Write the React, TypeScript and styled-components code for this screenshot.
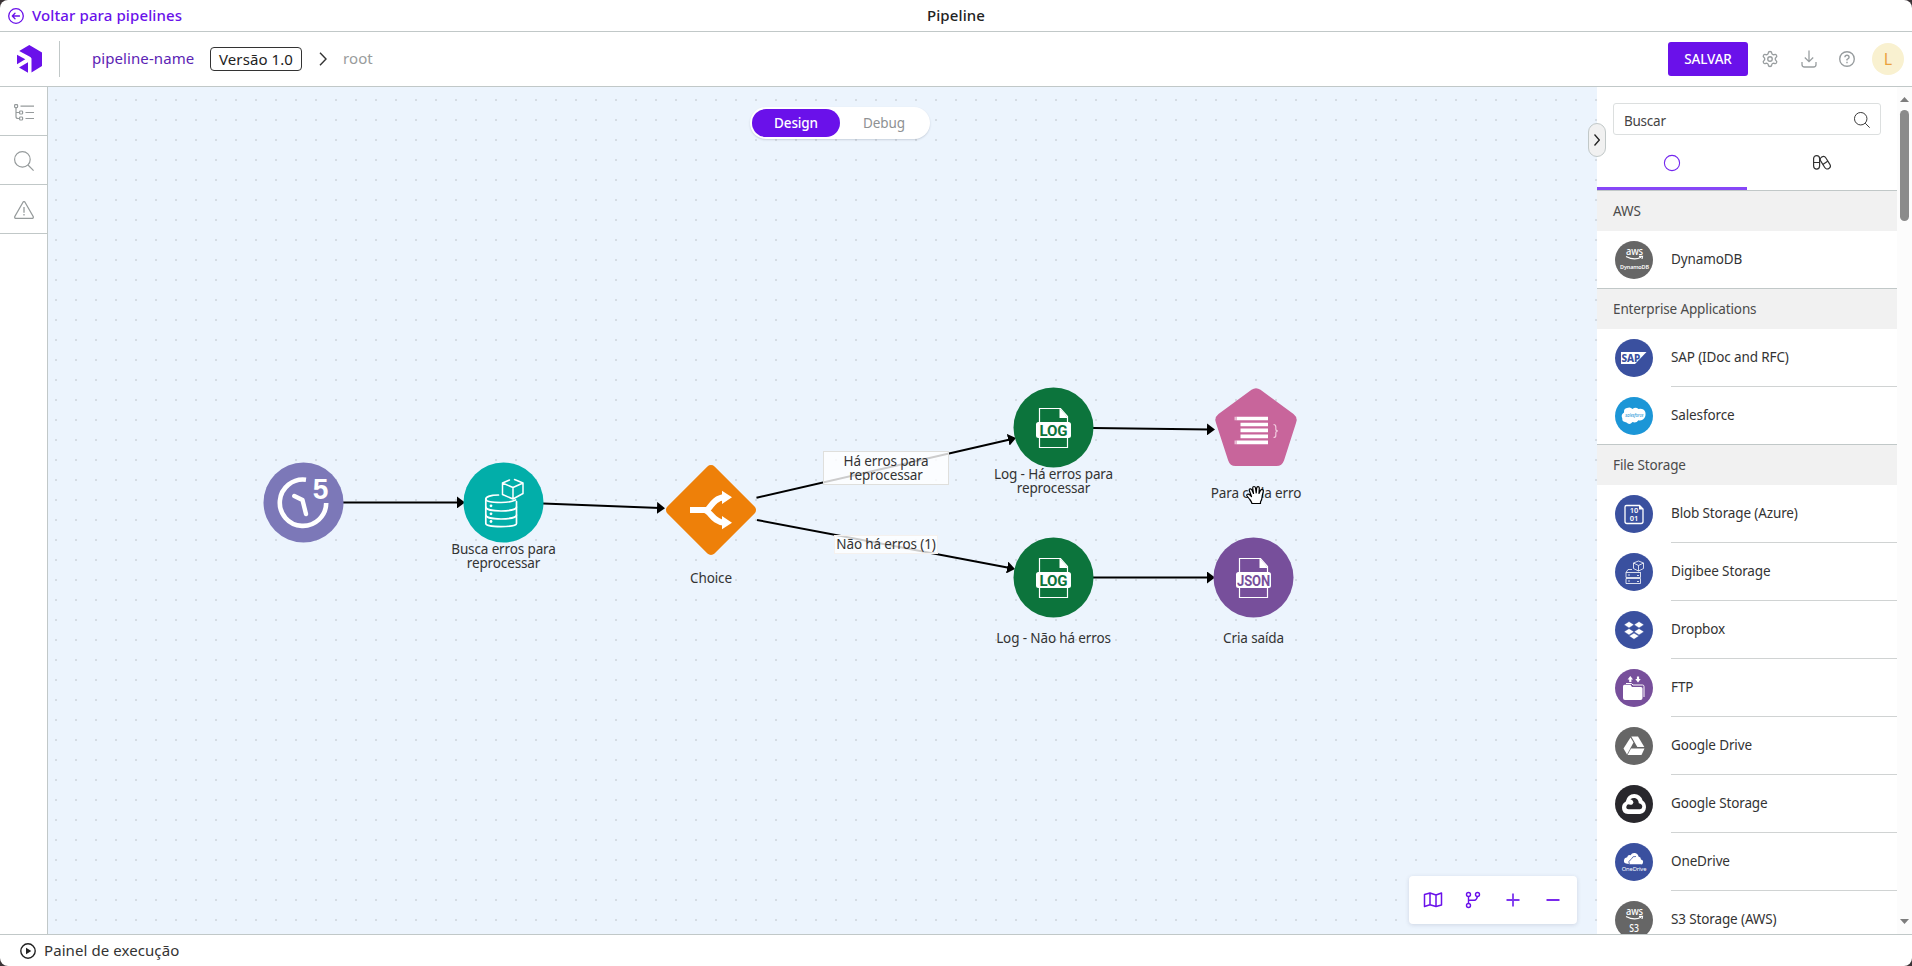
import React from 'react';
import styled, { createGlobalStyle, css } from 'styled-components';
import { Settings } from 'lucide-react';

const purple = '#6a11ea';
const line = '#c1c8c8';

const GlobalStyle = createGlobalStyle`
  * { box-sizing: border-box; }
  body { margin: 0; background: #3a3336; }
  button { font: inherit; letter-spacing: inherit; border: 0; background: none; padding: 0; margin: 0; }
`;

const Shell = styled.div`
  display: flex;
  flex-direction: column;
  width: 1912px;
  height: 966px;
  overflow: hidden;
  border-radius: 8px;
  background: #fff;
  color: #333;
  font: 13.5px/20px 'Noto Sans', sans-serif;
  letter-spacing: -0.13px;
`;

const TitleBar = styled.div`
  display: grid;
  grid-template-columns: 1fr auto 1fr;
  align-items: center;
  height: 32px;
  padding: 0 8px 2px;
  border-bottom: 1px solid ${line};
  font-size: 15px;
  font-weight: 500;
  letter-spacing: 0.11px;
  color: #222;
`;

const BackLink = styled.div`
  display: flex;
  align-items: center;
  gap: 8px;
  color: ${purple};
  svg { position: relative; top: 1px; }
`;

const Header = styled.header`
  display: flex;
  align-items: center;
  height: 55px;
  padding: 0 8px 0 16px;
  border-bottom: 1px solid ${line};
`;

const Divider = styled.div`
  width: 1px;
  height: 36px;
  margin: 0 32px 0 16px;
  background: ${line};
`;

const Crumbs = styled.div`
  display: flex;
  align-items: center;
  flex: 1;
  font-size: 15px;
  letter-spacing: 0.08px;
`;

const PipelineName = styled.span`
  width: 118px;
  padding-bottom: 2px;
  color: #5b23b4;
`;

const Version = styled.span`
  display: flex;
  align-items: center;
  justify-content: center;
  width: 92px;
  height: 24px;
  border: 1px solid #333;
  border-radius: 4px;
  color: #222;
`;

const Root = styled.span`
  padding-bottom: 2px;
  color: #999c9c;
`;

const SaveButton = styled.button`
  width: 80px;
  height: 34px;
  border-radius: 3px;
  background: ${purple};
  color: #fff;
  font-size: 13.5px;
  font-weight: 500;
`;

const HeaderTools = styled.div`
  display: flex;
  align-items: center;
  color: #999ea0;
`;

const ToolIcon = styled.span<{ $w: number }>`
  display: flex;
  align-items: center;
  justify-content: center;
  width: ${(p) => p.$w}px;
  height: 32px;
`;

const Avatar = styled.span`
  display: flex;
  align-items: center;
  justify-content: center;
  width: 32px;
  height: 32px;
  margin-left: 3px;
  border-radius: 50%;
  background: #f9f1d0;
  color: #eba13c;
  font-size: 16px;
`;

const Body = styled.div`
  display: flex;
  flex: 1;
  min-height: 0;
`;

const Rail = styled.nav`
  width: 48px;
  border-right: 1px solid ${line};
`;

const RailItem = styled.div`
  display: flex;
  align-items: center;
  justify-content: center;
  height: 49px;
  padding: 2px 0 0 1px;
  border-bottom: 1px solid ${line};
  color: #969b9c;
`;

const Canvas = styled.main`
  position: relative;
  display: flex;
  justify-content: center;
  flex: 1;
  background: conic-gradient(from 270deg at 2px 2px, #d5dce3 90deg, transparent 0) 7px 12px / 20px 20px #ecf4fd;
`;

const ModeSwitch = styled.div`
  position: absolute;
  top: 20px;
  left: 702px;
  display: flex;
  width: 180px;
  height: 32px;
  padding: 2px;
  border-radius: 16px;
  background: #fff;
  box-shadow: 0 1px 2px rgba(60, 70, 90, 0.2);
`;

const Mode = styled.button<{ $active?: boolean }>`
  width: 88px;
  border-radius: 14px;
  color: #8e9193;
  ${(p) => p.$active && css`
    background: ${purple};
    color: #fff;
    font-weight: 500;
  `}
`;

const Edges = styled.svg`
  position: absolute;
  inset: 0;
`;

const NodeBox = styled.div<{ $x: number; $y: number }>`
  position: absolute;
  left: ${(p) => p.$x - 48}px;
  top: ${(p) => p.$y - 87}px;
  svg { display: block; }
`;

const NodeLabel = styled.div<{ $x: number; $y: number }>`
  position: absolute;
  left: ${(p) => p.$x - 48 - 70}px;
  top: ${(p) => p.$y - 87}px;
  width: 140px;
  line-height: 14px;
  text-align: center;
  white-space: pre;
`;

const EdgeLabel = styled.div<{ $x: number; $y: number; $w: number; $h: number; $edge: string }>`
  position: absolute;
  left: ${(p) => p.$x - 48}px;
  top: ${(p) => p.$y - 87}px;
  width: ${(p) => p.$w}px;
  height: ${(p) => p.$h}px;
  display: flex;
  justify-content: center;
  padding-top: 1px;
  border: 1px solid ${(p) => p.$edge};
  background: rgba(255, 255, 255, 0.8);
  line-height: 14px;
  text-align: center;
  white-space: pre;
`;

const Zoomer = styled.div`
  position: absolute;
  right: 20px;
  bottom: 10px;
  display: flex;
  align-items: center;
  gap: 16px;
  height: 48px;
  padding: 0 12px;
  border-radius: 4px;
  background: #fff;
  box-shadow: 0 1px 4px rgba(40, 50, 80, 0.15);
`;

const Collapse = styled.button`
  position: absolute;
  z-index: 2;
  right: -9px;
  top: 36px;
  display: flex;
  align-items: center;
  justify-content: center;
  width: 18px;
  height: 34px;
  border: 1px solid ${line};
  border-radius: 9px;
  background: #f1f1f1;
`;

const Panel = styled.aside`
  display: flex;
  width: 315px;
  overflow: hidden;
  background: #fff;
`;

const PanelContent = styled.div`
  width: 300px;
  height: 847px;
  overflow: hidden;
`;

const SearchBox = styled.div`
  display: flex;
  align-items: center;
  justify-content: space-between;
  width: 268px;
  height: 32px;
  margin: 16px 16px 0;
  padding: 3px 10px 0 10px;
  border: 1px solid #dcdfdf;
  border-radius: 3px;
  letter-spacing: -0.25px;
  color: #444;
  svg { margin-top: -2px; }
`;

const Tabs = styled.div`
  display: flex;
  height: 56px;
  border-bottom: 1px solid ${line};
`;

const Tab = styled.div<{ $active?: boolean }>`
  display: flex;
  justify-content: center;
  width: 150px;
  padding-top: 17px;
  border-bottom: 3px solid ${(p) => (p.$active ? '#8747f7' : 'transparent')};
`;

const GroupTitle = styled.div`
  height: 40px;
  padding: 10px 16px;
  background: #f1f1f1;
  color: #4b4b4b;
`;

const Group = styled.div`
  border-bottom: 1px solid ${line};
`;

const Item = styled.div`
  display: flex;
  height: 58px;
  &:last-child { height: 57px; }
  &:last-child > span { border-bottom: 0; }
  > svg { flex: none; margin: 10px 18px 0; }
`;

const ItemName = styled.span`
  flex: 1;
  padding: 18px 0 0;
  border-bottom: 1px solid #d0d3d3;
`;

const Scrollbar = styled.div`
  display: flex;
  flex-direction: column;
  align-items: center;
  width: 15px;
  padding: 10px 0;
  background: #fcfcfc;
`;

const Thumb = styled.div`
  width: 9px;
  height: 111px;
  margin: 8px 0 auto;
  border-radius: 5px;
  background: #8b8b8b;
`;

const Footer = styled.footer`
  display: flex;
  align-items: center;
  gap: 8px;
  height: 32px;
  padding: 0 0 1px 20px;
  border-top: 1px solid ${line};
  font-size: 15px;
  letter-spacing: 0.08px;
  svg { position: relative; top: 1px; }
`;

const Logo = () => (
  <svg width="27" height="28" viewBox="16 45 27 28" fill={purple}>
    <path d="M19.2 51 29.3 45 42 52.6V66L31.5 72.6V58.5Q31 57 29 56.2Z" />
    <path d="M17 54.8 25.3 59.2 17 64.3Z" />
    <path d="M19 67.6 28 62.2V72.7Z" />
  </svg>
);

const Magnifier = ({ size, color }: { size: number; color: string }) => (
  <svg width={size} height={size} viewBox="0 0 20 20" fill="none" stroke={color} strokeWidth="1.2">
    <circle cx="8.4" cy="8.4" r="7.8" />
    <path d="M14 14l5.6 5.6" />
  </svg>
);

const DocBadge = ({ fill, text }: { fill: string; text: string }) => (
  <svg width="81" height="81" viewBox="-0.5 -0.5 81 81">
    <circle cx="40" cy="40" r="40" fill={fill} />
    <path d="M26 21H47L54 29V60H26Z" fill="none" stroke="#fff" strokeWidth="1.2" />
    <path d="M46 20.500v10h8.500z" fill="#fff" />
    <rect x="22.500" y="34.500" width="35" height="16" rx="2.500" fill="#fff" />
    <text x="40" y="48" textAnchor="middle" fontFamily="Roboto, sans-serif" fontWeight="700" fontSize="15.500" fill={fill}
      textLength={text === 'LOG' ? 28 : 33} lengthAdjust="spacingAndGlyphs">{text}</text>
  </svg>
);

const ClockNode = () => (
  <svg width="81" height="81" viewBox="-0.5 -0.5 81 81">
    <circle cx="40" cy="40" r="40" fill="#7c78b8" />
    <path d="M42.500 17.200A23.200 23.200 0 1 0 62.700 40.500" fill="none" stroke="#fff" strokeWidth="4.600" />
    <path d="M30.800 33.500 39 37.500 42.500 51.500" fill="none" stroke="#fff" strokeWidth="4.400" strokeLinecap="round" strokeLinejoin="round" />
    <text x="57" y="36" textAnchor="middle" fontFamily="'Liberation Sans', sans-serif" fontWeight="700" fontSize="29"
      textLength="15.500" lengthAdjust="spacingAndGlyphs" fill="#fff">5</text>
  </svg>
);

const DatabaseNode = () => (
  <svg width="81" height="81" viewBox="-0.5 -0.5 81 81" fill="none" stroke="#fff" strokeWidth="1.700" strokeLinecap="round" strokeLinejoin="round">
    <circle cx="40" cy="40" r="40" fill="#02aea9" stroke="none" />
    <path d="M35 32.500C28 32.500 22.300 34 22.300 36.500S29 40 37.500 40 49 39 52 37.500" />
    <path d="M22.300 36.500V61C22.300 63 29 64.200 37.500 64.200S53 63 53 61V39" />
    <path d="M22.300 44.500C22.300 47 29 48.500 37.500 48.500S53 47 53 44.500M22.300 52.500C22.300 55 29 56.500 37.500 56.500S53 55 53 52.500" />
    <g fill="#fff" stroke="none"><circle cx="27.500" cy="43.300" r="1.400" /><circle cx="27.500" cy="51.300" r="1.400" /><circle cx="27.500" cy="59" r="1.400" /></g>
    <path d="M39 20.500 46 17.500M51 17 59.500 20.500V31L49.500 36.500 39 32V20.500L49.500 25 59.500 20.500M49.500 25V36.500" strokeWidth="1.500" />
  </svg>
);

const ChoiceNode = () => (
  <svg width="92" height="92" viewBox="0 0 92 92">
    <rect x="12.700" y="12.700" width="66.600" height="66.600" rx="5" transform="rotate(45 46 46)" fill="#ee8009" />
    <path d="M25 46H41C45.500 46 47 34 59.500 33.300M39 46C45.500 46 47 58 59.500 58.700" fill="none" stroke="#fff" strokeWidth="6" />
    <path d="M57 26.700 67 33.300 57 40ZM57 52 67 58.700 57 65.200Z" fill="#fff" />
  </svg>
);

const ForEachNode = () => (
  <svg width="82" height="78" viewBox="0 0 82 78">
    <path d="M36.500 1.800Q41 -1.500 45.500 1.800L78.500 26Q83 29.500 81 35L69 72.500Q67 78 61.500 78H20.500Q15 78 13.200 72.500L1 35Q-1 29.500 3.500 26Z" fill="#c8659b" />
    <path d="M21.500 30.500H53M25.500 36.500H53M25.500 42.300H53M25.500 48.300H53M21.500 54.300H53" stroke="#fff" strokeWidth="3.700" />
    <path d="M19.500 30.500h2M19.500 54.300h2" stroke="#e9bdd5" strokeWidth="3.700" />
    <path d="M58.500 36.500Q60.800 36.500 60.800 39V41Q60.800 43 63 43Q60.800 43 60.800 45V47.500Q60.800 49.500 58.500 49.500" fill="none" stroke="#f1c9de" strokeWidth="1.200" />
  </svg>
);

const awsSmile = (
  <>
    <text x="19.500" y="13.600" textAnchor="middle" fontFamily="'Noto Sans', sans-serif" fontSize="10" fontWeight="500" textLength="17" lengthAdjust="spacingAndGlyphs" fill="#fff">aws</text>
    <path d="M11 15.500Q19.500 20 26 16.300M24 15.300H27.500L27 18" fill="none" stroke="#fff" strokeWidth="1.200" />
  </>
);

const cloud = 'M10 25Q7 24.500 7.300 21.500 5.500 17.500 9 15.500 8.500 11 13 10.700 15.500 9.800 17.500 12 20.500 9.600 23.500 12 28.500 11 30.300 15 31.500 20 28 22.500 25.500 24 23.500 23.300 21 26.500 17.500 25 14.500 28.500 11.500 25.500Z';

const glyphs: Record<string, [string, React.ReactNode]> = {
  dynamo: ['#666', <>{awsSmile}<text x="19.500" y="27.500" textAnchor="middle" fontFamily="'Noto Sans', sans-serif" fontSize="5.600" fontWeight="600" textLength="29" lengthAdjust="spacingAndGlyphs" fill="#fff">DynamoDB</text></>],
  sap: ['#3a509f', <><path d="M6 13H31.500L20 25H6Z" fill="#fff" /><text x="6.500" y="22.800" fontFamily="'Noto Sans', sans-serif" fontSize="10" fontWeight="800" textLength="18.500" lengthAdjust="spacingAndGlyphs" fill="#3a509f">SAP</text></>],
  salesforce: ['#1c96d7', <><path d={cloud} fill="#fff" /><text x="19.300" y="20" textAnchor="middle" fontFamily="'Noto Sans', sans-serif" fontSize="4.600" fontStyle="italic" textLength="18" lengthAdjust="spacingAndGlyphs" fill="#1c96d7">salesforce</text></>],
  blob: ['#3a509f', <><path d="M11.500 10.500H24.500L28 14V26.500Q28 28.500 26 28.500H12Q10 28.500 10 26.500V12Q10 10.500 11.500 10.500Z" fill="none" stroke="#fff" strokeWidth="1.300" /><path d="M24 10v4.500h4z" fill="#fff" /><g fill="#fff" fontFamily="'Noto Sans', sans-serif" fontSize="7.500" fontWeight="600" textAnchor="middle"><text x="19" y="18.300">10</text><text x="19" y="25.800">01</text></g></>],
  digibee: ['#3a509f', <g fill="none" stroke="#fff" strokeWidth="0.800"><path d="M18.500 10 23.500 8 28.500 10V15.500L23.500 18 18.500 15.500ZM18.500 10 23.500 12.500 28.500 10M23.500 12.500V18M11 19.500 13 16.500H17M11 19.500H26M11 19.500V24.500H25.500V20M11 25.500H25.500V30.500H11ZM13 22h2M13 28h2M22 22.500h2M22 28.500h2" /></g>],
  dropbox: ['#3a509f', <path d="M14 10.500 19 13.700 14 17 9 13.700ZM24 10.500 29 13.700 24 17 19 13.700ZM14 17.500 19 20.700 14 24 9 20.700ZM24 17.500 29 20.700 24 24 19 20.700ZM19 22 24 25.100 19 28.300 14 25.100Z" fill="#fff" stroke="#3a509f" strokeWidth="0.500" />],
  ftp: ['#774f9b', <g fill="#fff"><path d="M15.300 7 18 10.500H16.400V13H14.200V10.500H12.600ZM23 13.500 20.300 10H21.900V7.500H24.100V10H25.700Z" /><path d="M11 14.500H16.500L18 16H27.500Q29 16 29 17.500V28" fill="none" stroke="#fff" strokeWidth="1" /><path d="M8 17.500Q8 15.800 9.500 15.800H15.500L17 18H26Q27.500 18 27.500 19.500V29Q27.500 31 25.500 31H10Q8 31 8 29Z" /></g>],
  drive: ['#666', <g fill="#fff"><path d="M16.300 9.500H23L29.300 20H22.300Z" /><path d="M15.500 10.500 18.500 15.500 12 27.500 8.500 21.500Z" /><path d="M16 21.500H29.500L26.500 28H12.500Z" /></g>],
  gstorage: ['#28272c', <><path d="M13 29Q7 28.500 7 22.800 7 18.500 10.800 16.500 12.500 9 19.300 9 25.500 9 27.600 15.500 31 17.800 31 22.300 30.500 28.500 25 29Z" fill="#fff" /><path d="M15.300 14.300Q17.500 12.600 20 13 23.500 14 23.800 18.300 27.300 19 27.300 21.700 27.200 24 25 24.200H13.500Q11 24 11.300 21.700 11.700 19.300 14 19.300 15.500 20.300 17.500 19.300 19.300 17.500 17.800 15.800 16.600 14.700 15.300 14.300Z" fill="#28272c" /></>],
  onedrive: ['#3a509f', <><path d="M11 20.500Q8.500 20 9 17T12 14.500Q13 11.500 15.500 12.200 17 9.500 20 10T23.500 13.500Q26 14 26 16.500 28.500 17 28 19.500T26 21.300H15Z" fill="#fff" /><path d="M14.300 21Q12.500 18 16 16.500 17.500 12.500 21 13.500" fill="none" stroke="#3a509f" strokeWidth=".8" /><text x="19" y="27.800" textAnchor="middle" fontFamily="'Noto Sans', sans-serif" fontSize="5.600" textLength="24.500" lengthAdjust="spacingAndGlyphs" fill="#fff">OneDrive</text></>],
  s3: ['#666', <>{awsSmile}<text x="19" y="30.500" textAnchor="middle" fontFamily="'Noto Sans', sans-serif" fontSize="10.500" fontWeight="500" textLength="9.500" lengthAdjust="spacingAndGlyphs" fill="#fff">S3</text></>],
};

const Badge = ({ kind }: { kind: string }) => (
  <svg width="38" height="38" viewBox="0 0 38 38">
    <circle cx="19" cy="19" r="19" fill={glyphs[kind][0]} />
    {glyphs[kind][1]}
  </svg>
);

const groups = [
  { title: 'AWS', items: [['dynamo', 'DynamoDB']] },
  { title: 'Enterprise Applications', items: [['sap', 'SAP (IDoc and RFC)'], ['salesforce', 'Salesforce']] },
  {
    title: 'File Storage',
    items: [
      ['blob', 'Blob Storage (Azure)'],
      ['digibee', 'Digibee Storage'],
      ['dropbox', 'Dropbox'],
      ['ftp', 'FTP'],
      ['drive', 'Google Drive'],
      ['gstorage', 'Google Storage'],
      ['onedrive', 'OneDrive'],
      ['s3', 'S3 Storage (AWS)'],
    ],
  },
];

const edges = [
  [343, 502.4, 465, 502.4],
  [543, 503.6, 665, 508.2],
  [756.5, 497.8, 1016, 438],
  [757, 520, 1015, 569],
  [1093, 428, 1215, 429.5],
  [1093, 577.5, 1215, 577.5],
];

const labels: [number, number, string][] = [
  [503.5, 542, 'Busca erros para\nreprocessar'],
  [711, 571, 'Choice'],
  [1053.5, 467, 'Log - Há erros para\nreprocessar'],
  [1053.5, 631, 'Log - Não há erros'],
  [1256, 486, 'Para cada erro'],
  [1253.5, 631, 'Cria saída'],
];

export default function App() {
  return (
    <>
      <GlobalStyle />
      <Shell>
        <TitleBar>
          <BackLink>
            <svg width="16" height="16" viewBox="0 0 16 16" fill="none" stroke="currentColor" strokeWidth="1.300" strokeLinecap="round" strokeLinejoin="round">
              <circle cx="8" cy="8" r="7.300" />
              <path d="M11.500 8h-7M7 5.200 4.300 8 7 10.800" />
            </svg>
            Voltar para pipelines
          </BackLink>
          <span>Pipeline</span>
        </TitleBar>
        <Header>
          <Logo />
          <Divider />
          <Crumbs>
            <PipelineName>pipeline-name</PipelineName>
            <Version>Versão 1.0</Version>
            <svg width="41" height="14" viewBox="-17 0 41 14" fill="none" stroke="#333" strokeWidth="1.400">
              <path d="M1 .7 7 7 1 13.300" />
            </svg>
            <Root>root</Root>
          </Crumbs>
          <SaveButton>SALVAR</SaveButton>
          <HeaderTools>
            <ToolIcon $w={44}><Settings size={18} strokeWidth={1.8} /></ToolIcon>
            <ToolIcon $w={33}>
              <svg width="16" height="18" viewBox="0 0 16 18" fill="none" stroke="currentColor" strokeWidth="1.300">
                <path d="M8 .5V11.500M3.800 7.500 8 11.700 12.200 7.500M1 12V14.500Q1 17 3.500 17H12.500Q15 17 15 14.500V12" />
              </svg>
            </ToolIcon>
            <ToolIcon $w={44}>
              <svg width="16" height="16" viewBox="0 0 16 16" fill="none" stroke="currentColor" strokeWidth="1.400">
                <circle cx="8" cy="8" r="7.300" />
                <path d="M5.900 6.200Q6 4.300 8 4.300T10.100 6.200Q10.100 7.200 8 8.500V9.500M8 10.800v1.500" />
              </svg>
            </ToolIcon>
            <Avatar>L</Avatar>
          </HeaderTools>
        </Header>
        <Body>
          <Rail>
            <RailItem>
              <svg width="20" height="17" viewBox="0 0 20 17" fill="none" stroke="currentColor" strokeWidth="1.200">
                <rect x=".6" y=".6" width="3" height="3" rx=".8" /><rect x="5.600" y="7" width="3" height="3" rx=".8" /><rect x="5.600" y="13" width="3" height="3" rx=".8" />
                <path d="M2 3.600V12.500Q2 14.500 4 14.500H5.600M2 8.500H5.600M6.500 2.200H20M11.500 8.500H20M11.500 14.500H20" />
              </svg>
            </RailItem>
            <RailItem><Magnifier size={20} color="#969b9c" /></RailItem>
            <RailItem>
              <svg width="20" height="18" viewBox="0 0 20 18" fill="none" stroke="currentColor" strokeWidth="1.300" strokeLinejoin="round">
                <path d="M9 1.200Q10 0 11 1.200L19.200 15.500Q19.700 17.400 18 17.400H2Q.3 17.400 .8 15.500ZM10 6v5.800M10 13v1.600" />
              </svg>
            </RailItem>
          </Rail>
          <Canvas>
            <Edges width="1549" height="847" viewBox="48 87 1549 847">
              <defs>
                <marker id="tip" viewBox="0 0 8 12" refX="8" refY="6" markerWidth="8" markerHeight="12" markerUnits="userSpaceOnUse" orient="auto">
                  <path d="M0 0 8 6 0 12Z" />
                </marker>
              </defs>
              {edges.map(([x1, y1, x2, y2]) => (
                <g key={`${x1}-${y1}`}>
                  <line x1={x1} y1={y1} x2={x2 - 5} y2={y2 - ((y2 - y1) / (x2 - x1)) * 5} stroke="#000" strokeWidth="2" />
                  <line x1={x1} y1={y1} x2={x2} y2={y2} stroke="none" markerEnd="url(#tip)" />
                </g>
              ))}
            </Edges>
            <EdgeLabel $x={823} $y={451} $w={126} $h={34} $edge="#dfdfdc" style={{ paddingTop: 2 }}>{'Há erros para\nreprocessar'}</EdgeLabel>
            <EdgeLabel $x={834} $y={535} $w={104} $h={19} $edge="#f5f1ee">Não há erros (1)</EdgeLabel>

            <NodeBox $x={263} $y={462}><ClockNode /></NodeBox>
            <NodeBox $x={463} $y={462}><DatabaseNode /></NodeBox>
            <NodeBox $x={665} $y={464}><ChoiceNode /></NodeBox>
            <NodeBox $x={1013} $y={387}><DocBadge fill="#0c743c" text="LOG" /></NodeBox>
            <NodeBox $x={1013} $y={537}><DocBadge fill="#0c743c" text="LOG" /></NodeBox>
            <NodeBox $x={1215} $y={388}><ForEachNode /></NodeBox>
            <NodeBox $x={1213} $y={537}><DocBadge fill="#774f9b" text="JSON" /></NodeBox>
            {labels.map(([x, y, text]) => (
              <NodeLabel key={`${x}-${y}`} $x={x} $y={y}>{text}</NodeLabel>
            ))}
            <NodeBox $x={1246} $y={485}>
              <svg width="19" height="20" viewBox="0 0 19 20" fill="#fff" stroke="#000" strokeWidth="1.200" strokeLinejoin="round" strokeLinecap="round">
                <path d="M6 18.500Q5.500 16.500 3.800 14.500L1 11Q.3 9.600 1.500 9.200T4 10L5.500 11.500 3.300 5.500Q3 4 4.200 3.800T6 5L7.500 8.500 6.700 3Q6.700 1.500 8 1.500T9.500 3L10.200 8 10.700 2.800Q11 1.400 12.200 1.600T13.300 3.200L13 8.500 14.600 5.300Q15.500 4 16.600 4.600T17.300 6.300L16.200 11Q16 15 14.500 16.800V18.500Z" />
              </svg>
            </NodeBox>

            <ModeSwitch>
              <Mode $active>Design</Mode>
              <Mode>Debug</Mode>
            </ModeSwitch>
            <Zoomer>
              <svg width="24" height="24" viewBox="0 0 24 24" fill="none" stroke={purple} strokeWidth="1.500" strokeLinejoin="round">
                <path d="M3.500 6.500 9 5 15 7 20.500 5V17L15 18.500 9 16.700 3.500 18.500ZM9 5V16.700M15 7V18.500" />
              </svg>
              <svg width="24" height="24" viewBox="0 0 24 24" fill="none" stroke={purple} strokeWidth="1.400">
                <circle cx="7.500" cy="6.500" r="2" /><circle cx="16.500" cy="6.500" r="2" /><circle cx="7.500" cy="17.500" r="2" />
                <path d="M7.500 8.500V15.500M7.500 12.300H13.500Q15.500 12 16.500 8.500" />
              </svg>
              <svg width="24" height="24" viewBox="0 0 24 24" fill="none" stroke="#7c35ef" strokeWidth="1.800">
                <path d="M5.500 12H18.500M12 5.500V18.500" />
              </svg>
              <svg width="24" height="24" viewBox="0 0 24 24" fill="none" stroke={purple} strokeWidth="1.800">
                <path d="M5.500 12H18.500" />
              </svg>
            </Zoomer>
            <Collapse>
              <svg width="6" height="12" viewBox="0 0 6 12" fill="none" stroke="#222" strokeWidth="1.300"><path d="M.5 .5 5.300 6 .5 11.500" /></svg>
            </Collapse>
          </Canvas>
          <Panel>
            <PanelContent>
              <SearchBox>Buscar<Magnifier size={16} color="#333" /></SearchBox>
              <Tabs>
                <Tab $active>
                  <svg width="24" height="24" viewBox="0 0 24 24" fill="none" stroke="#7325ee" strokeWidth="1.100"><circle cx="12" cy="11" r="7.600" /></svg>
                </Tab>
                <Tab>
                  <svg width="20" height="20" viewBox="0 -1 20 20" fill="none" stroke="#333" strokeWidth="1.200">
                    <rect x="1.600" y="2.600" width="6" height="13.500" rx="3" /><path d="M1.600 9.500h6" />
                    <rect x="10.300" y="3" width="6" height="13.500" rx="3" transform="rotate(-32 13.300 9.700)" /><path d="M10.800 11.400 16 8" />
                  </svg>
                </Tab>
              </Tabs>
              {groups.map((g) => (
                <Group key={g.title}>
                  <GroupTitle>{g.title}</GroupTitle>
                  <div>
                    {g.items.map(([kind, name]) => (
                      <Item key={kind}><Badge kind={kind} /><ItemName>{name}</ItemName></Item>
                    ))}
                  </div>
                </Group>
              ))}
            </PanelContent>
            <Scrollbar>
              <svg width="9" height="5" viewBox="0 0 9 5" fill="#7d7d7d"><path d="M0 5 4.500 0 9 5Z" /></svg>
              <Thumb />
              <svg width="9" height="5" viewBox="0 0 9 5" fill="#7d7d7d"><path d="M0 0 4.500 5 9 0Z" /></svg>
            </Scrollbar>
          </Panel>
        </Body>
        <Footer>
          <svg width="16" height="16" viewBox="0 0 16 16" fill="none" stroke="#222" strokeWidth="1.400">
            <circle cx="8" cy="8" r="7.200" /><path d="M6 4.800V11.200L11.300 8Z" fill="#222" stroke="none" />
          </svg>
          Painel de execução
        </Footer>
      </Shell>
    </>
  );
}
